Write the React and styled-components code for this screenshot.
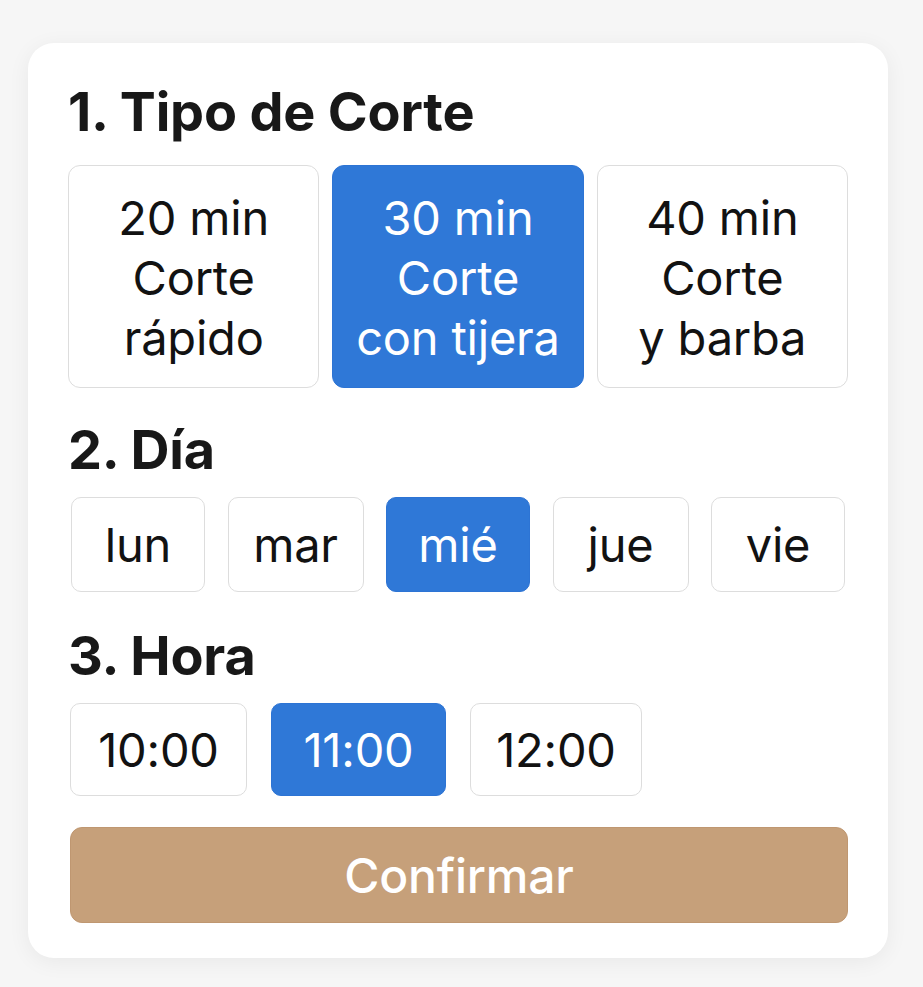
import React, { useState } from 'react';
import styled, { createGlobalStyle } from 'styled-components';

const GlobalStyle = createGlobalStyle`
  html, body {
    margin: 0;
    padding: 0;
    background: #f6f6f6;
    font-family: Inter, "Noto Sans", "Liberation Sans", sans-serif;
    color: #141414;
  }
  * { box-sizing: border-box; }
`;

const tipos = [
  { id: 20, lines: ['20 min', 'Corte', 'rápido'] },
  { id: 30, lines: ['30 min', 'Corte', 'con tijera'] },
  { id: 40, lines: ['40 min', 'Corte', 'y barba'] },
];

const dias = ['lun', 'mar', 'mié', 'jue', 'vie'];
const horas = ['10:00', '11:00', '12:00'];

export default function App() {
  const [tipo, setTipo] = useState(30);
  const [dia, setDia] = useState('mié');
  const [hora, setHora] = useState('11:00');

  return (
    <Page>
      <GlobalStyle />
      <Card>
        <Heading>1. Tipo de Corte</Heading>
        <TipoGrid>
          {tipos.map(t => (
            <Option key={t.id} $active={tipo === t.id} $radius={12} onClick={() => setTipo(t.id)}>
              {t.lines.map(l => <span key={l}>{l}</span>)}
            </Option>
          ))}
        </TipoGrid>

        <Heading>2. Día</Heading>
        <DiaGrid>
          {dias.map(d => (
            <Option key={d} $active={dia === d} $height={95} onClick={() => setDia(d)}>
              {d}
            </Option>
          ))}
        </DiaGrid>

        <Heading>3. Hora</Heading>
        <HoraRow>
          {horas.map(h => (
            <Option key={h} $active={hora === h} $height={93} onClick={() => setHora(h)}>
              {h}
            </Option>
          ))}
        </HoraRow>

        <Confirm>Confirmar</Confirm>
      </Card>
    </Page>
  );
}

const Page = styled.div`
  padding: 43px 35px 29px 28px;
`;

const Card = styled.div`
  background: #ffffff;
  border-radius: 26px;
  box-shadow: 0 4px 22px rgba(0, 0, 0, 0.06);
  padding: 39px 40px 35px 40px;
  display: flex;
  flex-direction: column;
`;

const Heading = styled.h2`
  margin: 0 0 17px 0;
  font-size: 54px;
  line-height: 60px;
  font-weight: 700;
  letter-spacing: -0.2px;
  color: #181818;
`;

const Option = styled.button`
  display: flex;
  flex-direction: column;
  align-items: center;
  justify-content: center;
  height: ${p => (p.$height ? `${p.$height}px` : 'auto')};
  padding: ${p => (p.$height ? '0' : '22px 4px 19px')};
  border: 1.5px solid ${p => (p.$active ? '#2d74d4' : '#dddddd')};
  border-radius: ${p => p.$radius || 10}px;
  background: ${p => (p.$active ? '#2f78d7' : '#ffffff')};
  color: ${p => (p.$active ? '#ffffff' : '#121212')};
  font-family: Inter, "Noto Sans", "Liberation Sans", sans-serif;
  font-size: 47px;
  line-height: 60px;
  font-weight: 400;
  letter-spacing: -0.2px;
  cursor: pointer;
`;

const TipoGrid = styled.div`
  display: grid;
  grid-template-columns: repeat(3, 1fr);
  gap: 13px;
  margin-top: 6px;
  margin-bottom: 32px;
`;

const DiaGrid = styled.div`
  display: grid;
  grid-template-columns: 134px 136px 144px 136px 134px;
  justify-content: space-between;
  padding: 0 3px;
  margin-bottom: 34px;
`;

const HoraRow = styled.div`
  display: grid;
  grid-template-columns: 177px 175px 172px;
  gap: 24px;
  padding-left: 2px;
  margin-bottom: 31px;
`;

const Confirm = styled.button`
  height: 96px;
  margin-left: 2px;
  border: 1px solid #bf9771;
  border-radius: 12px;
  background: #c6a07a;
  color: #ffffff;
  font-family: Inter, "Noto Sans", "Liberation Sans", sans-serif;
  font-size: 48px;
  font-weight: 500;
  letter-spacing: -0.2px;
  cursor: pointer;
`;
